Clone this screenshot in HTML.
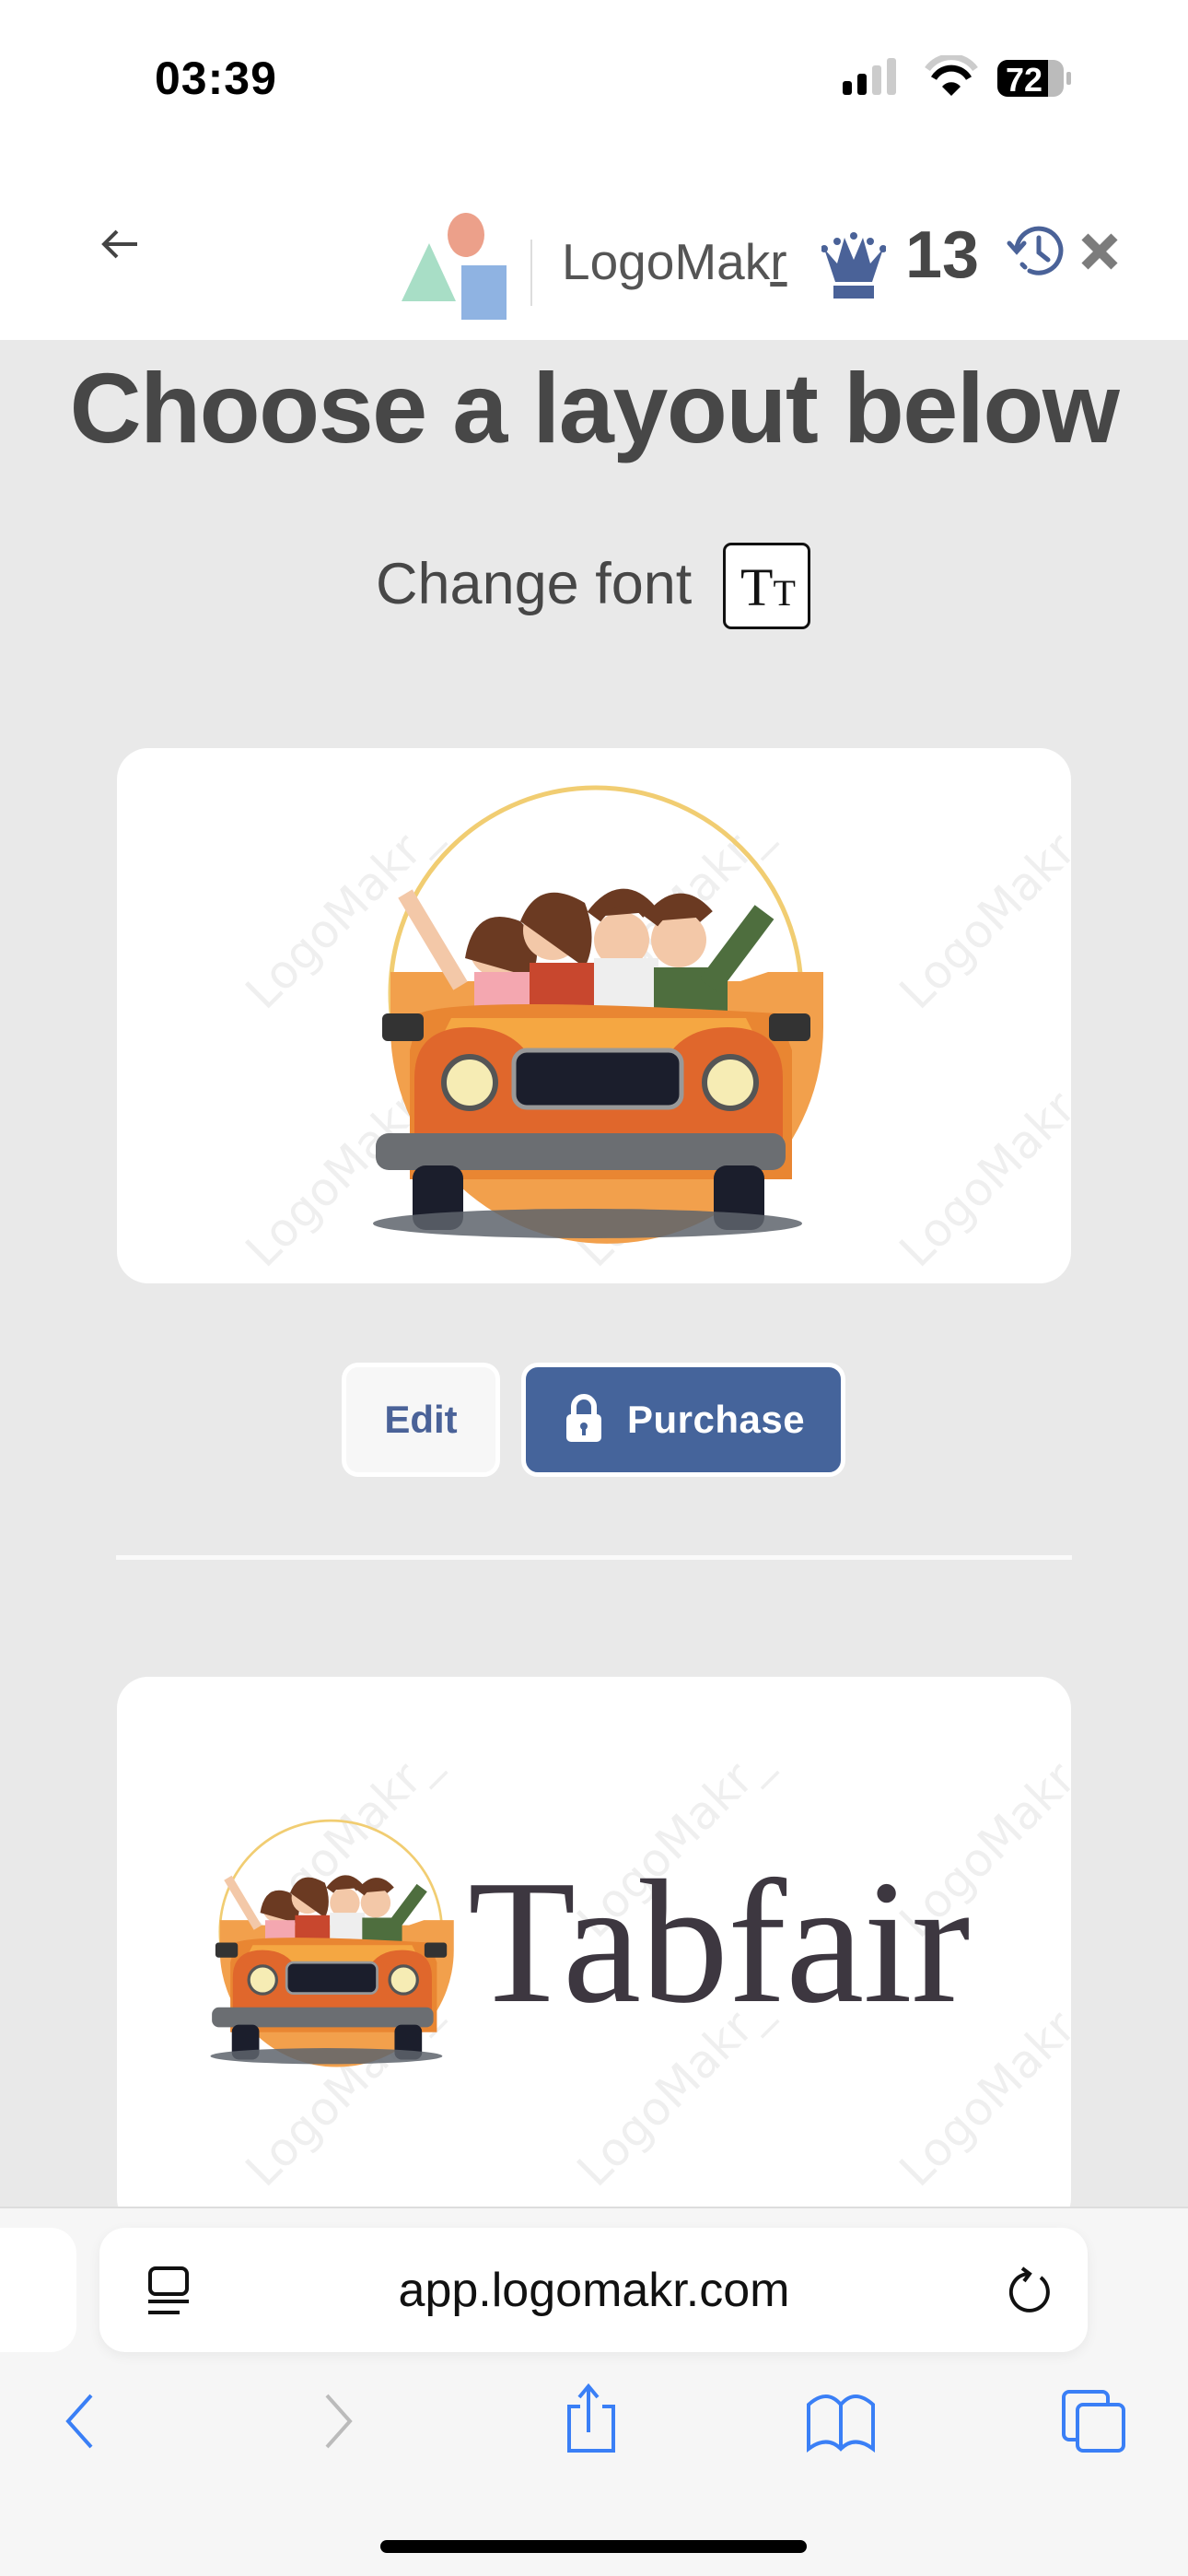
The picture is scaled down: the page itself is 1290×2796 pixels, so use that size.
<!DOCTYPE html>
<html><head><meta charset="utf-8"><style>
*{margin:0;padding:0;box-sizing:border-box}
body{width:1290px;height:2796px;background:#e9e9e9;position:relative;overflow:hidden;font-family:"Liberation Sans",sans-serif}
.a{position:absolute}
.wm{position:absolute;color:#efefef;font-size:50px;transform:rotate(-45deg);white-space:nowrap;font-family:"DejaVu Sans",sans-serif}
</style></head><body>
<div class="a" style="left:0;top:0;width:1290px;height:369px;background:#fff"></div>
<div class="a" style="left:168px;top:56px;font-size:50px;font-weight:bold;color:#000;letter-spacing:1px">03:39</div>
<svg class="a" style="left:910px;top:60px" width="270" height="50" viewBox="0 0 270 50">
<rect x="5" y="28" width="10" height="15" rx="3" fill="#000"/><rect x="21" y="20" width="10" height="23" rx="3" fill="#000"/><rect x="37" y="11" width="10" height="32" rx="3" fill="#ccc"/><rect x="53" y="3" width="10" height="40" rx="3" fill="#ccc"/>
<path d="M97 15a32 32 0 0 1 52 0" stroke="#ccc" stroke-width="7" fill="none"/><path d="M104 25a22 22 0 0 1 38 0" stroke="#000" stroke-width="7" fill="none"/><path d="M113 34l10 10 10-10a13 13 0 0 0-20 0z" fill="#000"/>
<rect x="173" y="5" width="72" height="40" rx="11" fill="#bbb"/><path d="M184 5h44v40h-44a11 11 0 0 1-11-11v-18a11 11 0 0 1 11-11z" fill="#000"/><rect x="248" y="18" width="5" height="14" rx="2" fill="#bbb"/>
<text x="202" y="39" font-size="36" font-weight="bold" fill="#fff" text-anchor="middle" font-family="Liberation Sans">72</text></svg>
<svg class="a" style="left:105px;top:245px" width="50" height="40" viewBox="0 0 50 40"><path d="M44 20H8M22 6L8 20l14 14" stroke="#444" stroke-width="4" fill="none"/></svg>
<svg class="a" style="left:430px;top:225px" width="130" height="130" viewBox="430 225 130 130">
<polygon points="466,264 495,327 436,327" fill="#a8dec6"/><ellipse cx="506" cy="255" rx="20" ry="24" fill="#eca08a"/><rect x="501" y="288" width="49" height="59" fill="#8fb3e2"/></svg>
<div class="a" style="left:576px;top:260px;width:2px;height:72px;background:#ddd"></div>
<div class="a" style="left:610px;top:252px;font-size:55px;color:#555;font-family:'Liberation Sans',sans-serif">LogoMak<u>r</u></div>
<svg class="a" style="left:892px;top:252px" width="70" height="75" viewBox="0 0 70 75"><path d="M3 18l12 36h40l12-36-14 16-8-28-10 24L25 6l-8 28z" fill="#4a6298"/><rect x="13" y="58" width="44" height="14" fill="#4a6298"/><circle cx="3" cy="18" r="4" fill="#4a6298"/><circle cx="67" cy="18" r="4" fill="#4a6298"/><circle cx="35" cy="4" r="4" fill="#4a6298"/><circle cx="17" cy="10" r="4" fill="#4a6298"/><circle cx="53" cy="10" r="4" fill="#4a6298"/></svg>
<div class="a" style="left:983px;top:236px;font-size:72px;font-weight:bold;color:#474747">13</div>
<svg class="a" style="left:1090px;top:236px" width="72" height="72" viewBox="0 0 72 72"><path d="M14 34a24 24 0 1 1 14 24" stroke="#4a6298" stroke-width="5" fill="none" stroke-linecap="round"/><path d="M6 28l8 9 8-9" stroke="#4a6298" stroke-width="5" fill="none" stroke-linecap="round"/><path d="M38 22v16l10 8" stroke="#4a6298" stroke-width="5" fill="none" stroke-linecap="round"/><path d="M20 51l3 3" stroke="#4a6298" stroke-width="5" stroke-linecap="round"/></svg>
<svg class="a" style="left:1172px;top:251px" width="44" height="44" viewBox="0 0 44 44"><path d="M6 6l32 32M38 6L6 38" stroke="#7c7c7c" stroke-width="10"/></svg>

<div class="a" style="left:0;top:380px;width:1290px;text-align:center;font-size:108px;font-weight:bold;color:#474747;letter-spacing:-1.5px">Choose a layout below</div>
<div class="a" style="left:408px;top:598px;font-size:63px;color:#474747">Change font</div>
<div class="a" style="left:785px;top:589px;width:95px;height:94px;border:3px solid #111;border-radius:9px;background:#fff;font-family:'Liberation Serif',serif;font-size:58px;color:#111;padding:12px 0 0 16px">T<span style="font-size:40px">T</span></div>

<div class="a" style="left:127px;top:812px;width:1036px;height:581px;background:#fff;border-radius:34px;overflow:hidden">
<div class="wm" style="left:110px;top:150px">LogoMakr_</div><div class="wm" style="left:470px;top:150px">LogoMakr_</div><div class="wm" style="left:820px;top:150px">LogoMakr_</div>
<div class="wm" style="left:110px;top:430px">LogoMakr_</div><div class="wm" style="left:470px;top:430px">LogoMakr_</div><div class="wm" style="left:820px;top:430px">LogoMakr_</div>
</div>
<svg width="0" height="0" style="position:absolute"><defs><g id="car">
<circle cx="267" cy="238" r="223" fill="none" stroke="#f1cd72" stroke-width="5"/>
<path d="M44 215h60l20 10h300l30-10h60v60a223 223 0 0 1-470 0z" fill="#f2a04c"/>
<circle cx="160" cy="190" r="30" fill="#f3c8a8"/><path d="M125 200q10-60 60-40 30 30 10 60z" fill="#6b3a22"/><rect x="135" y="215" width="60" height="50" fill="#f4a7b0"/>
<circle cx="220" cy="170" r="32" fill="#f3c8a8"/><path d="M185 160q20-50 70-20 15 40 0 70z" fill="#6b3a22"/><rect x="195" y="205" width="70" height="55" fill="#c8472e"/>
<circle cx="295" cy="180" r="30" fill="#f3c8a8"/><path d="M265 155q30-40 60-5" fill="#6b3a22" stroke="#6b3a22" stroke-width="18"/><rect x="265" y="200" width="70" height="55" fill="#eee"/>
<circle cx="357" cy="180" r="30" fill="#f3c8a8"/><path d="M327 160q30-40 60-5" fill="#6b3a22" stroke="#6b3a22" stroke-width="18"/><rect x="330" y="210" width="80" height="55" fill="#4e6e3e"/><path d="M390 230l60-80" stroke="#4e6e3e" stroke-width="26"/>
<path d="M120 230l-60-100" stroke="#f3c8a8" stroke-width="18"/>
<path d="M75 260q50-20 390 0l15 40v140H65V300z" fill="#e98632"/>
<path d="M110 265h320l20 40H90z" fill="#f5a742"/>
<rect x="35" y="260" width="45" height="30" rx="6" fill="#333"/><rect x="455" y="260" width="45" height="30" rx="6" fill="#333"/>
<path d="M70 330q0-55 60-55 50 0 70 40 80-10 140 0 20-40 70-40 60 0 60 55v90H70z" fill="#e0672c"/>
<circle cx="130" cy="335" r="28" fill="#f6ecb4" stroke="#555" stroke-width="6"/><circle cx="413" cy="335" r="28" fill="#f6ecb4" stroke="#555" stroke-width="6"/>
<rect x="178" y="300" width="182" height="62" rx="14" fill="#1b1e2c" stroke="#999" stroke-width="5"/>
<rect x="28" y="390" width="445" height="40" rx="14" fill="#6b6e72"/>
<rect x="68" y="425" width="55" height="70" rx="14" fill="#1b1e2c"/><rect x="395" y="425" width="55" height="70" rx="14" fill="#1b1e2c"/>
<ellipse cx="258" cy="488" rx="233" ry="16" fill="#5e646c" opacity=".85"/>
</g></defs></svg>
<svg class="a" style="left:380px;top:840px" width="520" height="520" viewBox="0 0 520 520"><use href="#car"/></svg>

<div class="a" style="left:371px;top:1479px;width:172px;height:124px;background:#f7f7f7;border:5px solid #fff;border-radius:18px;color:#4a6298;font-size:42px;font-weight:bold;text-align:center;line-height:114px">Edit</div>
<div class="a" style="left:566px;top:1479px;width:352px;height:124px;background:#45649b;border:5px solid #fff;border-radius:18px;color:#fff;font-size:42px;font-weight:bold;line-height:114px;padding-left:110px;letter-spacing:0.5px">Purchase</div>
<svg class="a" style="left:613px;top:1513px" width="42" height="52" viewBox="0 0 42 52"><path d="M10 22v-8a11 11 0 0 1 22 0v8" stroke="#fff" stroke-width="6" fill="none"/><rect x="2" y="22" width="38" height="30" rx="5" fill="#fff"/><circle cx="21" cy="35" r="4" fill="#45649b"/><rect x="19" y="36" width="4" height="9" fill="#45649b"/></svg>

<div class="a" style="left:126px;top:1688px;width:1038px;height:5px;background:#fafafa"></div>

<div class="a" style="left:127px;top:1820px;width:1036px;height:600px;background:#fff;border-radius:34px;overflow:hidden">
<div class="wm" style="left:110px;top:150px">LogoMakr_</div><div class="wm" style="left:470px;top:150px">LogoMakr_</div><div class="wm" style="left:820px;top:150px">LogoMakr_</div>
<div class="wm" style="left:110px;top:420px">LogoMakr_</div><div class="wm" style="left:470px;top:420px">LogoMakr_</div><div class="wm" style="left:820px;top:420px">LogoMakr_</div>
</div>
<svg class="a" style="left:215px;top:1968px" width="281" height="281" viewBox="0 0 520 520"><use href="#car"/></svg>
<div class="a" style="left:508px;top:2012px;font-family:'Liberation Serif',serif;font-size:192px;color:#3d3740;line-height:1;letter-spacing:-1px">Tabfair</div>

<div class="a" style="left:0;top:2395px;width:1290px;height:401px;background:#f6f6f6;border-top:2px solid #ddd"></div>
<div class="a" style="left:-40px;top:2418px;width:123px;height:135px;background:#fff;border-radius:28px"></div>
<div class="a" style="left:108px;top:2418px;width:1073px;height:135px;background:#fff;border-radius:28px;box-shadow:0 4px 14px rgba(0,0,0,.06)"></div>
<div class="a" style="left:0;top:2456px;width:1290px;text-align:center;font-size:52px;color:#111">app.logomakr.com</div>
<svg class="a" style="left:158px;top:2458px" width="50" height="56" viewBox="0 0 50 56"><rect x="5" y="4" width="40" height="28" rx="6" stroke="#111" stroke-width="4" fill="none"/><path d="M3 40h44M3 52h34" stroke="#111" stroke-width="4"/></svg>
<svg class="a" style="left:1090px;top:2458px" width="56" height="56" viewBox="0 0 56 56"><path d="M40 14a20 20 0 1 1-14-4" stroke="#111" stroke-width="4" fill="none"/><path d="M20 4l8 6-6 8" stroke="#111" stroke-width="4" fill="none"/></svg>
<svg class="a" style="left:0;top:2585px" width="1290" height="90" viewBox="0 2585 1290 90">
<path d="M99 2600l-25 28 25 28" stroke="#3a7ff6" stroke-width="4" fill="none"/>
<path d="M355 2600l25 28-25 28" stroke="#bbb" stroke-width="4" fill="none"/>
<path d="M630 2612h-12v48h48v-48h-12M639 2640v-50M629 2602l10-12 10 12" stroke="#3a7ff6" stroke-width="4" fill="none"/>
<path d="M913 2610q-15-18-35 0v48q20-15 35 0q15-15 35 0v-48q-20-18-35 0v48" stroke="#3a7ff6" stroke-width="4" fill="none"/>
<rect x="1155" y="2596" width="48" height="52" rx="6" stroke="#3a7ff6" stroke-width="4" fill="#f6f6f6"/><rect x="1170" y="2610" width="50" height="50" rx="6" stroke="#3a7ff6" stroke-width="4" fill="#f6f6f6"/>
</svg>
<div class="a" style="left:413px;top:2757px;width:463px;height:14px;border-radius:7px;background:#000"></div>
</body></html>
